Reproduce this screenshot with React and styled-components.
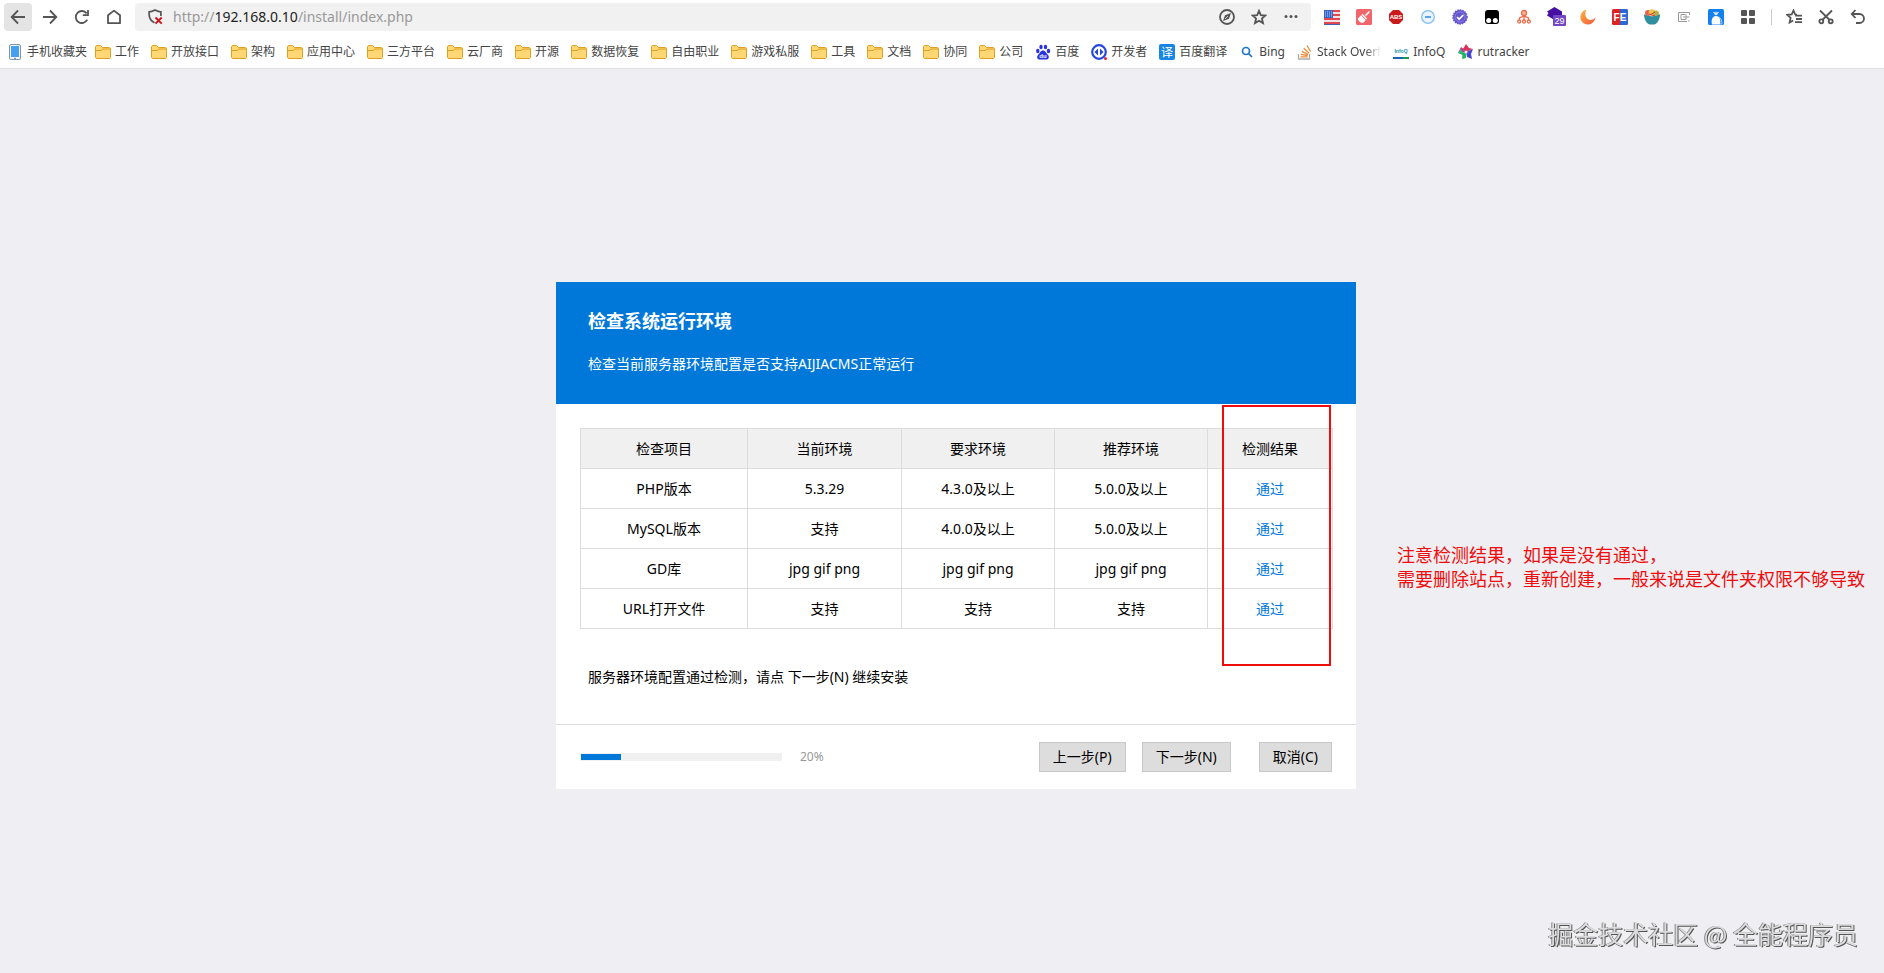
import React from 'react';
import styled, { createGlobalStyle } from 'styled-components';

const GlobalStyle = createGlobalStyle`
  *, *::before, *::after { box-sizing: border-box; }
  body {
    margin: 0;
    background: #efeff3;
    color: #000;
    font-family: "Noto Sans", "Noto Sans CJK SC", sans-serif;
    font-size: 14px;
    line-height: 20px;
  }
  h1, p { margin: 0; }
  button, input { font-family: inherit; }
`;

const Page = styled.div`
  display: flex;
  flex-direction: column;
  min-height: 100vh;
`;

const Browser = styled.header`
  background: #fff;
  border-bottom: 1px solid #dfdfe2;
`;

const Toolbar = styled.div`
  display: flex;
  align-items: center;
  gap: 4px;
  height: 34px;
  padding: 0 12px 0 4px;
`;

const IconButton = styled.button`
  display: flex;
  flex: none;
  align-items: center;
  justify-content: center;
  width: 28px;
  height: 28px;
  padding: 0;
  border: 0;
  border-radius: 4px;
  color: #555;
  background: ${(p) => (p.$active ? '#e4e4e4' : 'transparent')};
`;

const AddressBar = styled.div`
  display: flex;
  flex: 1;
  align-items: center;
  gap: 4px;
  height: 28px;
  min-width: 0;
  margin: 0 3px;
  padding: 0 6px;
  border-radius: 4px;
  background: #f1f1f1;
`;

const Address = styled.a`
  flex: 1;
  min-width: 0;
  overflow: hidden;
  color: #999;
  font-size: 14px;
  text-decoration: none;
  white-space: nowrap;
`;

const Host = styled.span`
  color: #222;
`;

const Divider = styled.span`
  width: 10px;
  height: 16px;
  background: linear-gradient(#ccc, #ccc) center / 1px 100% no-repeat;
`;

const Bookmarks = styled.nav`
  display: flex;
  align-items: center;
  gap: 8px;
  height: 34px;
  padding: 2px 7px 0;
  overflow: hidden;
`;

const BookmarkList = styled.div`
  display: flex;
  gap: 12px;
`;

const Bookmark = styled.a`
  display: flex;
  flex: none;
  align-items: center;
  gap: 4px;
  color: #444;
  font-size: 12px;
  line-height: 16px;
  text-decoration: none;
  white-space: nowrap;
`;

const BookmarkLabel = styled.span`
  mask-image: ${(p) => (p.$faded ? 'linear-gradient(90deg, #000 75%, transparent)' : 'none')};
`;

const Main = styled.main`
  display: grid;
  flex: 1;
  grid-template-columns: minmax(0, 1fr) minmax(0, 800px) minmax(0, 1fr);
  align-items: center;
  padding: 28px 0 0 28px;
`;

const Card = styled.section`
  position: relative;
  grid-column: 2;
  background: #fff;
`;

const CardHeader = styled.div`
  padding: 27px 32px 30px;
  background: #0078d9;
  color: #fff;
`;

const Title = styled.h1`
  margin-bottom: 21px;
  font-size: 18px;
  font-weight: 700;
  line-height: 24px;
`;

const CardBody = styled.div`
  padding: 24px 24px 37px;
`;

const CheckTable = styled.table`
  width: 100%;
  border-collapse: collapse;
  table-layout: fixed;
  text-align: center;

  th, td {
    height: 40px;
    padding: 1px 0 0;
    border: 1px solid #dcdcdc;
    font-weight: 400;
  }
  th { background: #f0f0f0; }
`;

const Col = styled.col`
  width: ${(p) => p.$width}px;
`;

const Passed = styled.span`
  color: #0078d9;
`;

const Note = styled.p`
  margin-top: 38px;
  padding: 0 8px;
`;

const CardFooter = styled.div`
  display: flex;
  align-items: center;
  height: 65px;
  padding: 0 24px;
  border-top: 1px solid #dcdcdc;
`;

const Track = styled.div`
  width: 202px;
  height: 8px;
  padding: 1px;
  background: #f0f0f0;
`;

const Fill = styled.div`
  height: 6px;
  background: #0078d9;
`;

const Percent = styled.span`
  flex: 1;
  margin-left: 18px;
  color: #999;
  font-size: 12px;
`;

const Actions = styled.div`
  display: flex;
  gap: 28px;
`;

const StepActions = styled.div`
  display: flex;
  gap: 16px;
`;

const ActionButton = styled.button`
  height: 30px;
  padding: 0 13px;
  border: 1px solid #c8c8c8;
  background: #ddd;
  color: #000;
  font-size: 14px;
  line-height: 20px;
`;

const Highlight = styled.div`
  position: absolute;
  top: 123px;
  right: 25px;
  width: 109px;
  height: 261px;
  border: 2px solid #ee0c0c;
`;

const Remark = styled.p`
  padding: 64px 0 0 41px;
  color: #ee0c0c;
  font-size: 18px;
  line-height: 24px;
  white-space: nowrap;
`;

const Watermark = styled.div`
  position: fixed;
  right: 26px;
  bottom: 22px;
  color: #dcdcde;
  font-family: "Noto Sans CJK SC", sans-serif;
  font-size: 25px;
  line-height: 36px;
  text-shadow: 1px 1px 0 #555, -1px 0 0 #888;
`;

const Svg = ({ size = 16, children, ...rest }) => (
  <svg width={size} height={size} viewBox="0 0 16 16" fill="none" aria-hidden="true" {...rest}>
    {children}
  </svg>
);

const Line = ({ size, children }) => (
  <Svg size={size} stroke="currentColor" strokeWidth="1.8">{children}</Svg>
);

const icons = {
  back: <Line><path d="M15 8H2M8 1.5 1.7 8 8 14.5" /></Line>,
  forward: <Line><path d="M1 8h13M8 1.5 14.3 8 8 14.5" /></Line>,
  reload: <Line><path d="M13.2 10.6A6 6 0 1 1 12.6 4.4M14 1v5.2H8.8" /></Line>,
  home: <Line><path d="M2 14.2V6.3L8 1.6l6 4.7v7.9z" strokeLinejoin="round" /></Line>,
  shield: (
    <Svg>
      <path d="M7.5 13.8C4 12 2.1 9.2 2.1 5V2.8C4.5 2.8 6 2 8 .9c2 1.100 3.500 1.900 5.900 1.900V7" stroke="#555" strokeWidth="1.700" />
      <path d="m8.500 8.500 6.200 6.200m0-6.200-6.200 6.200" stroke="#d0161b" strokeWidth="1.900" />
    </Svg>
  ),
  compass: <Line><circle cx="8" cy="8" r="7" /><path d="m4 12 2-5.800 6-2.200-2 5.800z" fill="currentColor" stroke="none" /><path d="m6 10 3-3" stroke="#f1f1f1" strokeWidth="0.800" /></Line>,
  star: <Line><path d="m8 1.800 1.800 4.300 4.600.4-3.500 3 1.100 4.600L8 11.700l-4 2.400 1.100-4.600-3.500-3 4.600-.4z" /></Line>,
  dots: <Svg><circle cx="3" cy="7.500" r="1.500" fill="#555" /><circle cx="8" cy="7.500" r="1.500" fill="#555" /><circle cx="13" cy="7.500" r="1.500" fill="#555" /></Svg>,
  flag: (
    <Svg>
      <path d="M0 1h16v14H0z" fill="#f3dfe3" />
      <path d="M0 2h16M0 6h16M0 10h16M0 14h16" stroke="#e0474f" strokeWidth="2" />
      <path d="M0 1h9v8H0z" fill="#3565c8" />
      <path d="M1 3h7M1 5h7M1 7h7" stroke="#b8cdf3" strokeWidth="1" strokeDasharray="1 1" />
      <path d="M0 15.500h16" stroke="#3f63ac" />
    </Svg>
  ),
  broom: (
    <Svg>
      <rect width="16" height="16" rx="1.500" fill="#f2666b" />
      <path d="m13.500 2.500-4 4" stroke="#fff" strokeWidth="1.700" />
      <path d="m6.500 4.800 4.700 4.700-1 1L5.500 5.800z" fill="#fff" />
      <path d="M5 6.300 9.700 11c-1 2-2.500 2.800-3.700 3-2.300-.7-3.500-2-4.200-4.200z" fill="#fff" />
    </Svg>
  ),
  adblock: (
    <Svg>
      <path d="M5 1h6l4 4v6l-4 4H5l-4-4V5z" fill="#c91a1c" />
      <text x="8" y="10.300" textAnchor="middle" fontFamily="Liberation Sans" fontWeight="700" fontSize="6" fill="#fff">ABS</text>
    </Svg>
  ),
  minus: <Svg stroke="#83bdf1"><circle cx="8" cy="8" r="6.300" fill="#e9f4ff" strokeWidth="1.300" /><path d="M5 8h6" strokeWidth="2" stroke="#5aa4ea" /></Svg>,
  verified: <Svg><circle cx="8" cy="8" r="7" fill="#6455cd" stroke="#6455cd" strokeWidth="1.500" strokeDasharray="1.500 1" /><circle cx="8" cy="8" r="5" stroke="#8c80e0" /><path d="m5 8 2.200 2.200L11.300 6" stroke="#fff" strokeWidth="1.700" /></Svg>,
  monkey: (
    <Svg>
      <rect x="1" y="1" width="14" height="14" rx="3" fill="#000" />
      <circle cx="4.700" cy="11.500" r="2.500" fill="#fff" /><circle cx="11.300" cy="11.500" r="2.500" fill="#fff" />
    </Svg>
  ),
  tree: (
    <Svg stroke="#ee6b48" strokeWidth="1.300">
      <circle cx="8" cy="4" r="2.500" fill="#f7b49f" /><path d="M8 6v5M3.500 11V9l4.500-2 4.500 2v2" />
      <circle cx="3.200" cy="12.500" r="1.500" /><circle cx="8" cy="12.500" r="1.500" /><circle cx="12.800" cy="12.500" r="1.500" />
    </Svg>
  ),
  layers: (
    <Svg size="20" viewBox="0 0 20 20">
      <path d="m8.500 0 7.500 4.500V8l-7.500 5L1 8.500 2.500 6 1 4.500z" fill="#4610a2" />
      <rect x="7" y="8" width="13" height="11" rx="1" fill="#7446c1" />
      <text x="13.500" y="17" textAnchor="middle" fontFamily="Liberation Sans" fontSize="9" fill="#fff">29</text>
    </Svg>
  ),
  moon: (
    <Svg>
      <defs><linearGradient id="moon" x1="0" y1="0" x2="1" y2="1"><stop stopColor="#ffb43c" /><stop offset="1" stopColor="#f2573f" /></linearGradient></defs>
      <path d="M6.500.5C-1 3-1.500 12 4.500 14.800 9.500 17 14.500 14 15.500 8.500 12.500 12 8 11.500 6.300 8.500 4.800 6 5 3 6.500.5z" fill="url(#moon)" />
    </Svg>
  ),
  fe: (
    <Svg>
      <rect width="16" height="16" rx="1.500" fill="#dc2222" /><path d="M8 0h6.500L16 1.500v13L14.500 16H8z" fill="#2c68d3" />
      <text x="8" y="12" textAnchor="middle" fontFamily="Liberation Sans" fontWeight="700" fontSize="10" fill="#fff">FE</text>
    </Svg>
  ),
  bowl: (
    <Svg>
      <circle cx="4" cy="4" r="3" fill="#e8644f" /><circle cx="8" cy="3.500" r="3.300" fill="#f4c44a" /><circle cx="12" cy="4.500" r="3" fill="#b8b04a" />
      <path d="m5 5 6 2M11 3 6 6" stroke="#d33f49" />
      <path d="M0 5c4 3 12 3 16 0 0 6-3 10-6 10.500H6C3 15 0 11 0 5z" fill="#318e9c" />
    </Svg>
  ),
  spiral: <Svg stroke="#999"><path d="M13.500 6V3.500h-11v9h8.500M13 12.500V11M13.500 8H10v2.500H5v-5h4.500M7 8h3V5.500" /></Svg>,
  penguin: (
    <Svg>
      <rect width="16" height="16" rx="1.500" fill="#1480ee" />
      <path d="M4 15.500c-1-4 0-8.500 4-8.500s5 4.500 4 8.500z" fill="#fff" /><circle cx="8" cy="4.500" r="1.800" fill="#d5eaff" />
      <path d="M5 3.500h6M11 8c2 1 3 4 3 7h-2" stroke="#a5d0fc" />
    </Svg>
  ),
  grid: <Svg><rect x="1" y="1" width="6" height="6" rx="1" fill="#555" /><rect x="9" y="1" width="6" height="6" rx="1" fill="#555" /><rect x="1" y="9" width="6" height="6" rx="1" fill="#555" /><rect x="9" y="9" width="6" height="6" rx="1" fill="#555" /></Svg>,
  favorites: <Line><path d="M11 5.700 9.200 5.500 7.500 1.500 5.700 5.500l-4.500.4 3.400 3-1 4.600 3.600-2M9 6.700h7M10 10h6M9 13.200h7" /></Line>,
  scissors: <Line><path d="m2 1.500 9.700 9.500M14 1.500 4.300 11" /><circle cx="3.300" cy="12.300" r="2" /><circle cx="12.700" cy="12.300" r="2" /></Line>,
  undo: <Line><path d="M2 5h7.500a4.500 4.500 0 0 1 0 9H6M5.500 1 1.700 5l3.800 4" /></Line>,
  phone: <Svg><rect x="2.500" y=".5" width="11" height="15" rx="1.500" fill="#f5f8fb" stroke="#7e96ad" /><path d="M4 2h8v11H4z" fill="#459ff0" /><path d="M7 14.300h2" stroke="#777" /></Svg>,
  folder: (
    <Svg>
      <path d="M.5 13V3c0-.9.600-1.500 1.500-1.500h3.500L7.500 3.500H14c.9 0 1.500.6 1.500 1.500v8c0 .9-.6 1.500-1.500 1.500H2c-.9 0-1.500-.6-1.500-1.500z" fill="#ffd775" stroke="#dfa020" />
      <path d="M1 6.500h5l2-1.500h7" stroke="#dfa020" />
    </Svg>
  ),
  baidu: (
    <Svg>
      <g fill="#2932e1">
        <ellipse cx="2.800" cy="7" rx="1.700" ry="2.200" /><ellipse cx="6" cy="3" rx="1.700" ry="2.300" />
        <ellipse cx="10.500" cy="3" rx="1.700" ry="2.300" /><ellipse cx="13.500" cy="7" rx="1.700" ry="2.200" />
        <path d="M8 6.500c2.500 0 3 2.500 5 4.500 2 2.500 0 5-2.500 4.500H5.500C3 16 1 13.500 3 11c2-2 2.500-4.500 5-4.500z" />
      </g>
      <text x="8" y="14.300" textAnchor="middle" fontFamily="Liberation Sans" fontWeight="700" fontSize="6" fill="#fff">du</text>
    </Svg>
  ),
  developer: <Svg><circle cx="8" cy="8" r="6.800" stroke="#2649dc" strokeWidth="2.200" /><path d="M7 4.500 3.500 8 7 11.500zM9 4.500 12.500 8 9 11.500z" fill="#2649dc" /><circle cx="14.500" cy="14.500" r="1.500" fill="#e12632" /></Svg>,
  translate: (
    <Svg>
      <rect width="16" height="16" rx="2" fill="#1787e5" />
      <text x="8" y="12.500" textAnchor="middle" fontFamily="Noto Sans CJK SC" fontSize="12" fill="#fff">译</text>
    </Svg>
  ),
  search: <Svg stroke="#1a76c7" strokeWidth="1.700"><circle cx="7" cy="7" r="3.500" /><path d="m9.500 9.500 3.500 3.500" /></Svg>,
  stack: (
    <Svg>
      <path d="M1.500 10v5h11v-5" stroke="#b0aba6" strokeWidth="1.300" />
      <path d="M3.500 12.800h7M3.700 10.300l7 1.200M4.700 7.300l6.500 3M6.700 4.300l5.300 4.600M10 1.500l3.600 6" stroke="#ec8b3a" strokeWidth="1.300" />
    </Svg>
  ),
  infoq: (
    <Svg>
      <text x="8" y="8.500" textAnchor="middle" fontFamily="Liberation Sans" fontWeight="700" fontSize="5" fill="#1b93a8">InfoQ</text>
      <path d="M0 14h10" stroke="#1b63b5" strokeWidth="2" /><path d="M10 14h6" stroke="#1d9a45" strokeWidth="2" />
    </Svg>
  ),
  rutracker: (
    <Svg>
      <path d="m8 8-3-3 3-5 3 4 4 1z" fill="#d73558" /><path d="m8 8 7-3-2 5 1 5-5-2z" fill="#4647d1" />
      <path d="M8 8v6l-4 1 .5-4L0 9z" fill="#1db560" /><path d="m8 8-8 1 3-6 3 2z" fill="#c9398a" /><path d="M0 9l3-4 2 4z" fill="#28c07a" />
      <circle cx="8" cy="8" r="1.500" fill="#f4e8f2" />
    </Svg>
  ),
};

const navigation = [
  { icon: 'back', label: '后退', active: true },
  { icon: 'forward', label: '前进' },
  { icon: 'reload', label: '刷新' },
  { icon: 'home', label: '主页' },
];

const addressTools = [
  { icon: 'compass', label: '兼容模式' },
  { icon: 'star', label: '收藏' },
  { icon: 'dots', label: '更多' },
];

const extensions = [
  { icon: 'flag', label: '翻译' },
  { icon: 'broom', label: '清理' },
  { icon: 'adblock', label: '广告拦截' },
  { icon: 'minus', label: '缩放' },
  { icon: 'verified', label: '验证' },
  { icon: 'monkey', label: '脚本管理' },
  { icon: 'tree', label: '站点结构' },
  { icon: 'layers', label: '图层' },
  { icon: 'moon', label: '夜间模式' },
  { icon: 'fe', label: '前端助手' },
  { icon: 'bowl', label: '书签沙拉' },
  { icon: 'spiral', label: '代码' },
  { icon: 'penguin', label: '助手' },
  { icon: 'grid', label: '全部扩展' },
];

const tools = [
  { icon: 'favorites', label: '收藏夹' },
  { icon: 'scissors', label: '截图' },
  { icon: 'undo', label: '恢复' },
];

const bookmarks = [
  ...['工作', '开放接口', '架构', '应用中心', '三方平台', '云厂商', '开源', '数据恢复', '自由职业', '游戏私服', '工具', '文档', '协同', '公司']
    .map((label) => ({ icon: 'folder', label })),
  { icon: 'baidu', label: '百度' },
  { icon: 'developer', label: '开发者' },
  { icon: 'translate', label: '百度翻译' },
  { icon: 'search', label: 'Bing' },
  { icon: 'stack', label: 'Stack Overf', faded: true },
  { icon: 'infoq', label: 'InfoQ' },
  { icon: 'rutracker', label: 'rutracker' },
];

const columns = [
  { title: '检查项目', width: 167 },
  { title: '当前环境', width: 154 },
  { title: '要求环境', width: 153 },
  { title: '推荐环境', width: 153 },
  { title: '检测结果', width: 125 },
];

const checks = [
  ['PHP版本', '5.3.29', '4.3.0及以上', '5.0.0及以上'],
  ['MySQL版本', '支持', '4.0.0及以上', '5.0.0及以上'],
  ['GD库', 'jpg gif png', 'jpg gif png', 'jpg gif png'],
  ['URL打开文件', '支持', '支持', '支持'],
];

const progress = 20;

const IconButtons = ({ items }) =>
  items.map(({ icon, label, active }) => (
    <IconButton key={icon} type="button" aria-label={label} $active={active}>
      {icons[icon]}
    </IconButton>
  ));

const BookmarkLink = ({ icon, label, faded }) => (
  <Bookmark href="#">
    {icons[icon]}
    <BookmarkLabel $faded={faded}>{label}</BookmarkLabel>
  </Bookmark>
);

export default function App() {
  return (
    <Page>
      <GlobalStyle />
      <Browser>
        <Toolbar>
          <IconButtons items={navigation} />
          <AddressBar>
            <IconButton type="button" aria-label="不安全">{icons.shield}</IconButton>
            <Address href="#">http://<Host>192.168.0.10</Host>/install/index.php</Address>
            <IconButtons items={addressTools} />
          </AddressBar>
          <IconButtons items={extensions} />
          <Divider />
          <IconButtons items={tools} />
        </Toolbar>
        <Bookmarks>
          <BookmarkLink icon="phone" label="手机收藏夹" />
          <BookmarkList>
            {bookmarks.map((b) => <BookmarkLink key={b.label} {...b} />)}
          </BookmarkList>
        </Bookmarks>
      </Browser>

      <Main>
        <Card>
          <CardHeader>
            <Title>检查系统运行环境</Title>
            <p>检查当前服务器环境配置是否支持AIJIACMS正常运行</p>
          </CardHeader>
          <CardBody>
            <CheckTable>
              <colgroup>
                {columns.map((c) => <Col key={c.title} $width={c.width} />)}
              </colgroup>
              <thead>
                <tr>{columns.map((c) => <th key={c.title} scope="col">{c.title}</th>)}</tr>
              </thead>
              <tbody>
                {checks.map((row) => (
                  <tr key={row[0]}>
                    {row.map((cell, i) => <td key={i}>{cell}</td>)}
                    <td><Passed>通过</Passed></td>
                  </tr>
                ))}
              </tbody>
            </CheckTable>
            <Note>服务器环境配置通过检测，请点 下一步(N) 继续安装</Note>
          </CardBody>
          <CardFooter>
            <Track role="progressbar" aria-label="安装进度" aria-valuenow={progress} aria-valuemin={0} aria-valuemax={100}>
              <Fill style={{ width: `${progress}%` }} />
            </Track>
            <Percent>{progress}%</Percent>
            <Actions>
              <StepActions>
                <ActionButton type="button">上一步(P)</ActionButton>
                <ActionButton type="button">下一步(N)</ActionButton>
              </StepActions>
              <ActionButton type="button">取消(C)</ActionButton>
            </Actions>
          </CardFooter>
          <Highlight />
        </Card>
        <Remark>
          注意检测结果，如果是没有通过，<br />
          需要删除站点，重新创建，一般来说是文件夹权限不够导致
        </Remark>
      </Main>
      <Watermark>掘金技术社区 @ 全能程序员</Watermark>
    </Page>
  );
}
